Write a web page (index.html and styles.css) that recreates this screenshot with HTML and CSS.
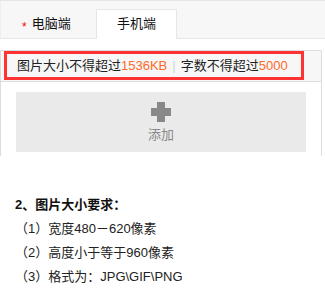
FILE: index.html
```html
<!DOCTYPE html>
<html lang="zh-CN">
<head>
<meta charset="utf-8">
<link rel="stylesheet" href="styles.css">
</head>
<body>
<div class="tabs">
  <div class="tab"><span class="star">*</span>电脑端</div>
  <div class="tab tab-active">手机端</div>
</div>
<div class="panel">
  <div class="panel-head">
    <div class="notice">图片大小不得超过<span class="num">1536KB</span><span class="sep">|</span>字数不得超过<span class="num">5000</span></div>
  </div>
  <div class="panel-body">
    <div class="add-box">
      <svg class="plus" width="20" height="20" viewBox="0 0 20 20"><rect x="0" y="6" width="20" height="8" fill="#888"/><rect x="6" y="0" width="8" height="20" fill="#888"/></svg>
      <span class="add-text">添加</span>
    </div>
  </div>
</div>
<div class="rules">
  <div class="rules-title">2、图片大小要求：</div>
  <div class="rule">（1）宽度480－620像素</div>
  <div class="rule">（2）高度小于等于960像素</div>
  <div class="rule">（3）格式为：JPG\GIF\PNG</div>
</div>
</body>
</html>
```
FILE: styles.css
```css
html, body {
  margin: 0;
  padding: 0;
  background: #fff;
}
body {
  width: 325px;
  font-family: "Liberation Sans", "Noto Sans CJK SC", sans-serif;
  font-size: 13px;
  color: #222;
}
.tabs {
  display: flex;
  align-items: flex-end;
  height: 37px;
  background: #f7f7f7;
  border-top: 1px solid #e6e6e6;
  border-bottom: 1px solid #e6e6e6;
  border-left: 1px solid #eee;
}
.tab {
  width: 74px;
  height: 28px;
  line-height: 28px;
  padding-left: 21px;
  color: #111;
  font-size: 13px;
}
.star {
  display: inline-block;
  color: #f00;
  font-size: 12px;
  line-height: 12px;
  margin-right: 5px;
  position: relative;
  top: 3px;
}
.tab-active {
  width: 79px;
  padding-left: 0;
  text-align: center;
  background: #fff;
  border: 1px solid #e6e6e6;
  border-bottom: none;
  height: 29px;
  margin-bottom: -1px;
  line-height: 28px;
}
.panel {
  margin-top: 11px;
  width: 320px;
  border: 1px solid #ddd;
  border-bottom: none;
}
.panel-head {
  height: 30px;
  background: #f7f7f7;
  border-bottom: 1px solid #ddd;
  padding-left: 3px;
}
.notice {
  box-sizing: border-box;
  width: 300px;
  height: 29px;
  border: 3px solid #f33;
  line-height: 23px;
  padding-left: 10px;
  color: #222;
  white-space: nowrap;
}
.num {
  color: #ff6a2a;
}
.sep {
  color: #c9d6e3;
  margin: 0 5px;
}
.panel-body {
  padding: 10px 15px 4px 15px;
}
.add-box {
  width: 290px;
  height: 60px;
  background: #eaeaea;
  display: flex;
  flex-direction: column;
  align-items: center;
  box-sizing: border-box;
  padding-top: 10px;
}
.plus {
  display: block;
}
.add-text {
  margin-top: 5px;
  font-size: 13px;
  line-height: 16px;
  color: #888;
}
.rules {
  padding-top: 37px;
  padding-left: 15px;
}
.rules-title {
  font-weight: bold;
  line-height: 24px;
  color: #111;
}
.rule {
  line-height: 24px;
  color: #222;
}
```
